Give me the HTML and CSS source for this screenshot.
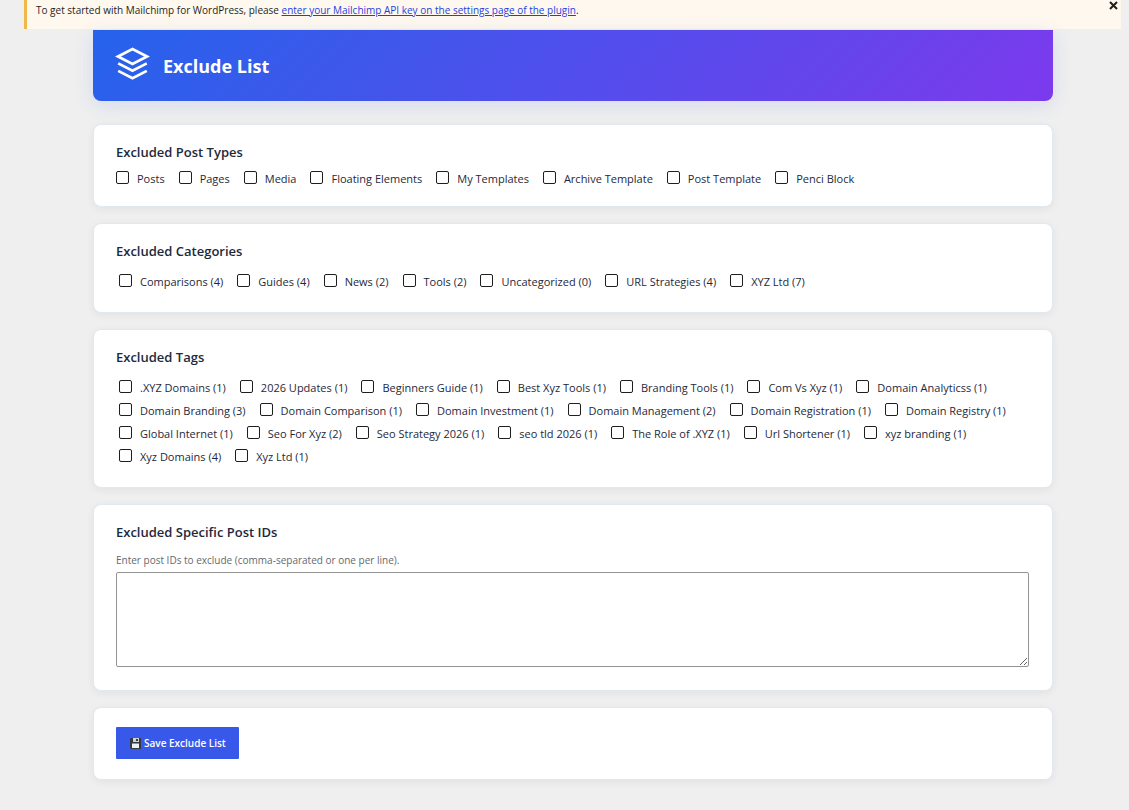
FILE: index.html
```html
<!DOCTYPE html>
<html lang="en">
<head>
<meta charset="utf-8">
<title>Exclude List</title>
<meta name="viewport" content="width=device-width, initial-scale=1">
<link rel="stylesheet" href="styles.css">
</head>
<body>
<div class="notice">
  <p class="notice-text">To get started with Mailchimp for WordPress, please <a href="#">enter your Mailchimp API key on the settings page of the plugin</a>.</p>
  <button class="notice-close" type="button" aria-label="Dismiss">
    <svg width="9" height="9" viewBox="0 0 9 9" aria-hidden="true"><path d="M1 1L8 8M8 1L1 8" fill="none" stroke="currentColor" stroke-width="2"/></svg>
  </button>
</div>
<main class="page">
  <header class="banner">
    <svg class="banner-icon" viewBox="0 0 36 34" aria-hidden="true">
      <g fill="none" stroke="#fff" stroke-width="2.700">
        <path d="M3 9.500L17.500 2.100L32 9.500L17.500 16.900Z"/>
        <path d="M3.200 16.400L17.500 23.700L31.800 16.400"/>
        <path d="M3.200 23.900L17.500 31.200L31.800 23.900"/>
      </g>
    </svg>
    <h1 class="banner-title">Exclude List</h1>
  </header>
  <form class="cards">
    <section class="card">
      <h2 class="card-title">Excluded Post Types</h2>
      <div class="options options-types">
        <label class="option"><input type="checkbox">Posts</label>
        <label class="option"><input type="checkbox">Pages</label>
        <label class="option"><input type="checkbox">Media</label>
        <label class="option"><input type="checkbox">Floating Elements</label>
        <label class="option"><input type="checkbox">My Templates</label>
        <label class="option"><input type="checkbox">Archive Template</label>
        <label class="option"><input type="checkbox">Post Template</label>
        <label class="option"><input type="checkbox">Penci Block</label>
      </div>
    </section>
    <section class="card">
      <h2 class="card-title">Excluded Categories</h2>
      <div class="options options-terms">
        <label class="option"><input type="checkbox">Comparisons (4)</label>
        <label class="option"><input type="checkbox">Guides (4)</label>
        <label class="option"><input type="checkbox">News (2)</label>
        <label class="option"><input type="checkbox">Tools (2)</label>
        <label class="option"><input type="checkbox">Uncategorized (0)</label>
        <label class="option"><input type="checkbox">URL Strategies (4)</label>
        <label class="option"><input type="checkbox">XYZ Ltd (7)</label>
      </div>
    </section>
    <section class="card">
      <h2 class="card-title">Excluded Tags</h2>
      <div class="options options-terms">
        <label class="option"><input type="checkbox">.XYZ Domains (1)</label>
        <label class="option"><input type="checkbox">2026 Updates (1)</label>
        <label class="option"><input type="checkbox">Beginners Guide (1)</label>
        <label class="option"><input type="checkbox">Best Xyz Tools (1)</label>
        <label class="option"><input type="checkbox">Branding Tools (1)</label>
        <label class="option"><input type="checkbox">Com Vs Xyz (1)</label>
        <label class="option"><input type="checkbox">Domain Analyticss (1)</label>
        <label class="option"><input type="checkbox">Domain Branding (3)</label>
        <label class="option"><input type="checkbox">Domain Comparison (1)</label>
        <label class="option"><input type="checkbox">Domain Investment (1)</label>
        <label class="option"><input type="checkbox">Domain Management (2)</label>
        <label class="option"><input type="checkbox">Domain Registration (1)</label>
        <label class="option"><input type="checkbox">Domain Registry (1)</label>
        <label class="option"><input type="checkbox">Global Internet (1)</label>
        <label class="option"><input type="checkbox">Seo For Xyz (2)</label>
        <label class="option"><input type="checkbox">Seo Strategy 2026 (1)</label>
        <label class="option"><input type="checkbox">seo tld 2026 (1)</label>
        <label class="option"><input type="checkbox">The Role of .XYZ (1)</label>
        <label class="option"><input type="checkbox">Url Shortener (1)</label>
        <label class="option"><input type="checkbox">xyz branding (1)</label>
        <label class="option"><input type="checkbox">Xyz Domains (4)</label>
        <label class="option"><input type="checkbox">Xyz Ltd (1)</label>
      </div>
    </section>
    <section class="card">
      <h2 class="card-title">Excluded Specific Post IDs</h2>
      <label class="hint" for="post-ids">Enter post IDs to exclude (comma-separated or one per line).</label>
      <textarea class="ids" id="post-ids"></textarea>
    </section>
    <section class="card">
      <button class="save" type="button">
        <svg width="11" height="11" viewBox="0 0 11 11" aria-hidden="true">
          <path d="M0 1V10L1 11H11V0H1Z" fill="#34383f"/>
          <path d="M3 0H9V4H3Z" fill="#c9d3dc"/>
          <path d="M6 1H8V3H6Z" fill="#34383f"/>
          <path d="M2 6H9V10H2Z" fill="#eef1f4"/>
          <path d="M2 5H9V6H2Z" fill="#5da0c4"/>
        </svg>
        Save Exclude List
      </button>
    </section>
  </form>
</main>
</body>
</html>
```
FILE: styles.css
```css
* {
  box-sizing: border-box;
}

body {
  margin: 0;
  background: #efefef;
  color: #1e293b;
  font-family: "Segoe UI", "Open Sans", "Noto Sans", sans-serif;
  font-size: 11px;
}

.notice {
  display: flex;
  align-items: flex-start;
  justify-content: space-between;
  margin: 0 8px 1px 24px;
  padding-bottom: 9px;
  border-left: 3px solid #f0b849;
  background: #fef8ee;
  color: #1e1e1e;
}

.notice-text {
  margin: 0;
  padding-left: 9px;
  font-size: 10px;
  line-height: 20px;
}

.notice-text a {
  color: #1f3fe0;
}

.notice-close {
  display: flex;
  padding: 1px 3px;
  border: 0;
  background: none;
  color: #1e1e1e;
}

.page {
  padding: 0 8px 30px 25px;
}

.banner,
.cards {
  max-width: 960px;
  margin: 0 auto;
}

.banner {
  display: flex;
  align-items: center;
  gap: 12px;
  padding: 14px 22px 17px;
  border-radius: 0 0 8px 8px;
  background: linear-gradient(135deg, #2563eb, #7c3aed);
  box-shadow: 0 4px 20px rgba(37, 70, 235, 0.12);
}

.banner-icon {
  width: 36px;
  height: 34px;
}

.banner-title {
  margin: 0;
  padding-top: 4px;
  color: #fff;
  font-size: 18px;
  line-height: 36px;
  font-weight: 700;
}

.cards {
  display: flex;
  flex-direction: column;
  gap: 16px;
  padding-top: 23px;
}

.card {
  padding: 17px 23px 16px 22px;
  border: 1px solid #e2e8f0;
  border-radius: 8px;
  background: #fff;
  box-shadow: 0 2px 8px rgba(0, 0, 0, 0.06);
}

.card-title {
  margin: 0;
  font-size: 13px;
  line-height: 20px;
  font-weight: 600;
}

.options {
  display: flex;
  flex-wrap: wrap;
  gap: 1px 14px;
}

.options-types {
  padding-top: 6px;
}

.options-terms {
  padding: 10px 3px 3px;
}

.option {
  display: flex;
  align-items: center;
  gap: 8px;
  line-height: 22px;
}

.option input {
  appearance: none;
  width: 13px;
  height: 13px;
  margin: 0 0 3px;
  border: 1px solid #1e1e1e;
  border-radius: 2px;
  background: #fff;
}

.option input:checked {
  background: #3858e9;
}

.hint {
  display: block;
  padding-top: 9px;
  color: #646970;
  font-size: 10px;
  line-height: 18px;
}

.ids {
  display: block;
  width: 100%;
  height: 95px;
  margin: 3px 0 7px;
  border: 1px solid #949494;
  border-radius: 2px;
  background: #fff;
  font: inherit;
}

.save {
  display: flex;
  align-items: center;
  gap: 3px;
  height: 32px;
  margin: 2px 0 4px;
  padding: 0 13px 0 14px;
  border: 0;
  border-radius: 1px;
  background: #3858e9;
  color: #fff;
  font-family: inherit;
  font-size: 10px;
  font-weight: 600;
}
```
